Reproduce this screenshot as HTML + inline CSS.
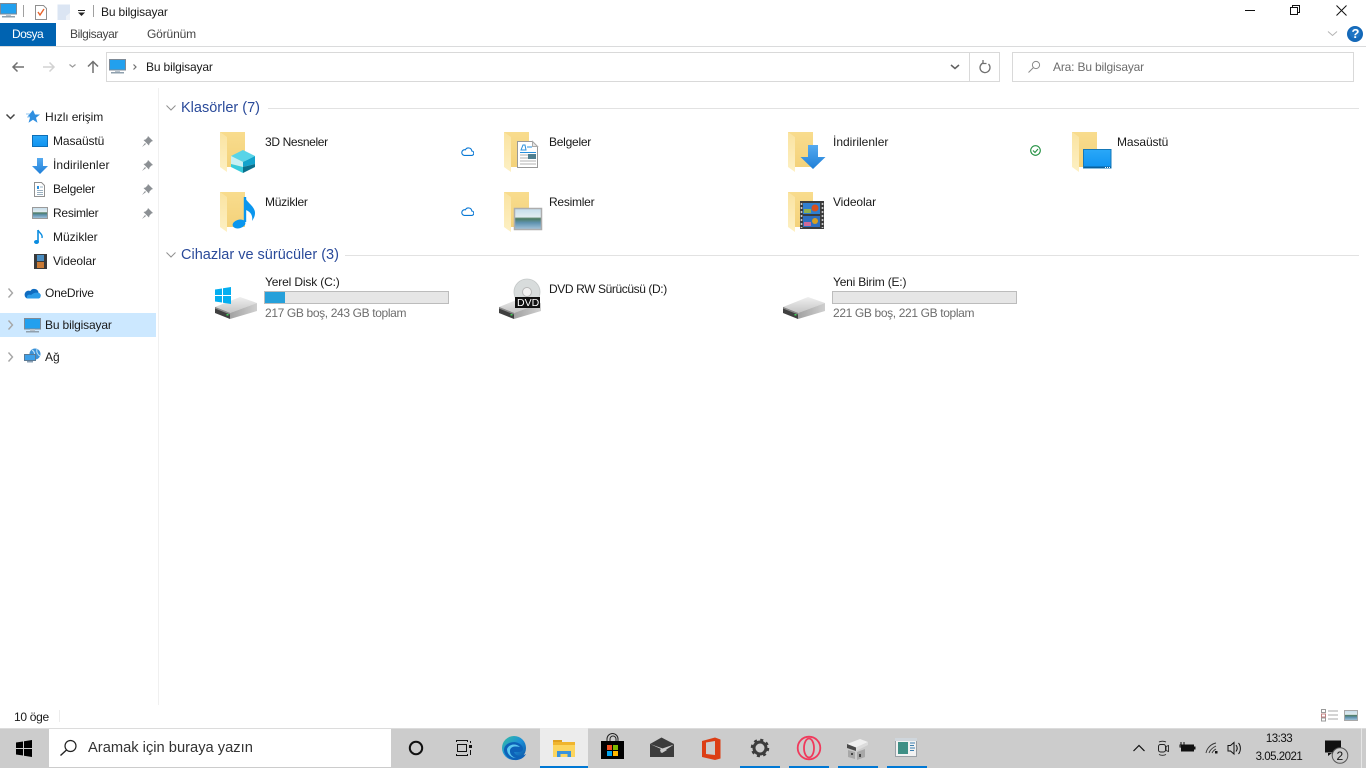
<!DOCTYPE html>
<html lang="tr"><head><meta charset="utf-8"><title>Bu bilgisayar</title>
<style>
html,body{margin:0;padding:0;width:1366px;height:768px;overflow:hidden;background:#fff;font-family:"Liberation Sans",sans-serif}
.t{position:absolute;white-space:nowrap;font-size:12px;line-height:16px;height:16px;color:#1a1a1a}
.g{color:#6d6d6d}
.r{color:#444}
.h{font-size:14.5px;line-height:20px;height:20px;color:#2a4a9a}
svg{position:absolute;left:0;top:0}
</style></head><body>
<svg width="1366" height="768" viewBox="0 0 1366 768" fill="none">
<defs>
<linearGradient id="fb" x1="0" y1="0" x2="0" y2="1"><stop offset="0" stop-color="#f8dc8e"/><stop offset="1" stop-color="#f4d27a"/></linearGradient>
<linearGradient id="fl" x1="0" y1="0" x2="0" y2="1"><stop offset="0" stop-color="#fae3a0"/><stop offset="1" stop-color="#fdf0c4"/></linearGradient>
<linearGradient id="scr" x1="0" y1="0" x2="0" y2="1"><stop offset="0" stop-color="#2aa8f8"/><stop offset="1" stop-color="#0f93f0"/></linearGradient>
<linearGradient id="arr" x1="0" y1="0" x2="0" y2="1"><stop offset="0" stop-color="#55aaf0"/><stop offset="1" stop-color="#1f7fd8"/></linearGradient>
<linearGradient id="pic" x1="0" y1="0" x2="0" y2="1"><stop offset="0" stop-color="#c4dcea"/><stop offset=".4" stop-color="#e2ecf0"/><stop offset=".48" stop-color="#4d7a60"/><stop offset=".68" stop-color="#5f93b0"/><stop offset="1" stop-color="#a8c6dc"/></linearGradient>
<linearGradient id="top" x1="0" y1="0" x2="0" y2="1"><stop offset="0" stop-color="#efefef"/><stop offset="1" stop-color="#c4c4c4"/></linearGradient>
<linearGradient id="rf" x1="0" y1="0" x2="1" y2="0"><stop offset="0" stop-color="#a2a2a2"/><stop offset="1" stop-color="#cfcfcf"/></linearGradient>
<linearGradient id="edge" x1="0" y1="0" x2="1" y2="1"><stop offset="0" stop-color="#35c1a0"/><stop offset=".5" stop-color="#1c8fd8"/><stop offset="1" stop-color="#0b4f9e"/></linearGradient>

<symbol id="folder" viewBox="0 0 40 40" width="40" height="40" overflow="visible">
<rect x="0" y="0" width="25" height="35" fill="url(#fb)"/>
<path d="M0 0l7 5v35l-7-5z" fill="url(#fl)"/>
</symbol>
<symbol id="drive" viewBox="0 0 44 24" width="44" height="24" overflow="visible">
<path d="M1 10L26 0 43 6 16 16z" fill="url(#top)"/>
<path d="M16 16L43 6v8L16 22z" fill="url(#rf)"/>
<path d="M1 10l15 6v6L1 16z" fill="#404040"/>
<path d="M1 10l15 6v1.500L1 11.500z" fill="#8a8a8a"/>
<rect x="12.500" y="17" width="2" height="1.500" fill="#3fd45a"/>
</symbol>
<symbol id="mon" viewBox="0 0 17 15" width="17" height="15">
<rect x=".5" y=".5" width="16" height="10.5" fill="#22a0ee" stroke="#7f8a96"/>
<rect x="6" y="11" width="5" height="2" fill="#b9c3cc"/>
<rect x="2" y="13" width="13" height="1.500" fill="#8fa0ae"/>
</symbol>
<symbol id="pin" viewBox="0 0 11 11" width="11" height="11">
<path d="M6 0l5 5-1.500 .5L7.500 7.500 7 9.500 1.500 4 3.500 3.500 5.500 1.500z M3 7l-3 4 4-3z" fill="#8c9094"/>
</symbol>
<symbol id="cloud" viewBox="0 0 13 9" width="13" height="9">
<path d="M3 8.400h7.400a2.200 2.200 0 0 0 .4-4.400A3.400 3.400 0 0 0 4.400 2.800 2.800 2.800 0 0 0 3 8.400z" stroke="#0a78d4" stroke-width="1.100" fill="none"/>
</symbol>
</defs>

<!-- title bar -->
<use href="#mon" x="0" y="3"/>
<rect x="23" y="5" width="1" height="12" fill="#a0a0a0"/>
<path d="M35.500 5.500h8l3 3v11h-11z" fill="#fff" stroke="#8f8f8f"/>
<path d="M38 12l2 3 4-6" stroke="#e8622a" stroke-width="1.400"/>
<path d="M57.500 4.500h12.500v15.500h-12.500z" fill="#dbe5f3"/>
<path d="M66 16l4-3v7h-4z" fill="#eef2f8"/>
<rect x="78" y="10" width="7" height="1" fill="#222"/>
<path d="M78 12.500h7l-3.500 3.500z" fill="#222"/>
<rect x="93" y="5" width="1" height="12" fill="#a0a0a0"/>
<rect x="1245" y="10" width="10" height="1" fill="#111"/>
<path d="M1290.500 7.500h7v7h-7z M1292.500 7.500v-2h7v7h-2" stroke="#111"/>
<path d="M1336.500 5.500l10 10m0-10l-10 10" stroke="#111"/>

<!-- ribbon -->
<rect x="0" y="23" width="56" height="23" fill="#0063b1"/>
<rect x="0" y="46" width="1366" height="1" fill="#dadbdc"/>
<path d="M1328 31.500l4.500 4 4.500-4" stroke="#b4b4b4"/>
<circle cx="1355" cy="34" r="8" fill="#1468b8"/>
<circle cx="1355" cy="33" r="5.500" fill="#2a82d0" opacity=".5"/>

<!-- nav -->
<path d="M13 67h11M17.500 62.500L13 67l4.500 4.500" stroke="#707070" stroke-width="1.500"/>
<path d="M43 67h11M49.500 62.500L54 67l-4.500 4.500" stroke="#d2d2d2" stroke-width="1.500"/>
<path d="M69.500 64.500l3 2.500 3-2.500" stroke="#9a9a9a" stroke-width="1.200"/>
<path d="M93 73V61.500M88 66.500l5-5 5 5" stroke="#707070" stroke-width="1.500"/>
<rect x="106.500" y="52.500" width="893" height="29" stroke="#d9d9d9"/>
<rect x="969" y="53" width="1" height="28" fill="#d9d9d9"/>
<use href="#mon" x="109" y="59"/>
<path d="M133.500 64.500l2.500 2.500-2.500 2.500" stroke="#707070" stroke-width="1.200"/>
<path d="M951 65l4 3.500 4-3.500" stroke="#606060" stroke-width="1.500"/>
<path d="M988.500 64a5 5 0 1 1-5.500-1M983 60v3.500h3.500" stroke="#707070" stroke-width="1.300"/>
<rect x="1012.500" y="52.500" width="341" height="29" stroke="#d9d9d9"/>
<circle cx="1036" cy="65" r="3.600" stroke="#8a8a8a"/>
<path d="M1033.500 67.500l-5 5" stroke="#8a8a8a"/>

<!-- sidebar -->
<rect x="158" y="88" width="1" height="617" fill="#f0f0f0"/>
<rect x="0" y="313" width="156" height="24" fill="#cce8ff"/>
<path d="M6.500 114.500l4 4 4-4" stroke="#444" stroke-width="1.500"/>
<path d="M33 110l2 4.500h5l-4 3.300 1.500 5-4.500-3-4.500 3 1.500-5-2-1.800z" fill="#2f8fe0"/>
<path d="M26 114h4M27 117h3" stroke="#8fc6f0"/>
<rect x="32.500" y="135.500" width="15" height="11" fill="url(#scr)" stroke="#0d6fb8"/>
<path d="M37 158h6v8h5l-8 8-8-8h5z" fill="url(#arr)"/>
<path d="M34.500 182.500h7l3 3v11h-10z" fill="#fff" stroke="#909090"/>
<path d="M37 186h2v3h-2z" fill="#2a90dd"/><path d="M37 190.500h6M37 192.500h6M37 194.500h6M40 187h3" stroke="#9ab0c0"/>
<rect x="32.500" y="207.500" width="15" height="11" fill="url(#pic)" stroke="#9a9a9a"/>
<path d="M38 230v12" stroke="#0a8ce0" stroke-width="1.600"/>
<path d="M38 230c1 3 5 4 4 8" stroke="#0a8ce0" stroke-width="1.400"/>
<ellipse cx="36.500" cy="242" rx="2.500" ry="2" fill="#0a8ce0"/>
<rect x="34" y="254" width="13" height="15" fill="#3a3a3a"/>
<rect x="37" y="255" width="7" height="6" fill="#4a8dc0"/><rect x="37" y="262" width="7" height="6" fill="#c97a35"/>
<use href="#pin" x="142" y="136"/><use href="#pin" x="142" y="160"/><use href="#pin" x="142" y="184"/><use href="#pin" x="142" y="208"/>
<path d="M8.500 288.500l4 4.500-4 4.500M8.500 320.500l4 4.500-4 4.500M8.500 352.500l4 4.500-4 4.500" stroke="#a6a6a6" stroke-width="1.400"/>
<path d="M27 298.500h11a2.800 2.800 0 0 0 .6-5.500A4.500 4.500 0 0 0 30.300 291 3.800 3.800 0 0 0 27 298.500z" fill="#0f6cc0"/>
<path d="M27 298.500h11a2.800 2.800 0 0 0 .6-5.500c-3-1-6 .5-7.500 2-2-1-5 0-4.100 3.500z" fill="#2a9be8"/>
<use href="#mon" x="24" y="318"/>
<circle cx="35" cy="354" r="5.500" fill="#3a92d8"/>
<path d="M32 350c2 1 4 4 1 8M37 349c-1 3 1 6 3 7" stroke="#bfe0f5"/>
<rect x="24.500" y="354.500" width="11" height="6" fill="#3ea0e8" stroke="#5a7a95"/>
<rect x="27" y="361" width="6" height="1.500" fill="#8aa0b5"/>

<!-- headers -->
<path d="M166.500 105.500l4.500 4.500 4.500-4.500M166.500 252.500l4.500 4.500 4.500-4.500" stroke="#909090"/>
<rect x="268" y="108" width="1091" height="1" fill="#e2e2e2"/>
<rect x="345" y="255" width="1014" height="1" fill="#e2e2e2"/>

<!-- folders -->
<use href="#folder" x="220" y="132"/>
<path d="M243 150l12 6-12 6-12-6z" fill="#58d4e8"/>
<path d="M231 156l12 6v5l-12-3z" fill="#c8f0f4"/>
<path d="M243 162l12-6v8l-12 3z" fill="#13a3cc"/>
<path d="M231 164l12 3v6l-12-6z" fill="#38cbdc"/>
<path d="M243 167l12-3v3l-12 6z" fill="#0a6f8c"/>

<use href="#folder" x="504" y="132"/>
<path d="M517.500 141.500h15l5 5v21h-20z" fill="#fff" stroke="#999"/>
<path d="M532.500 141.500v5h5z" stroke="#aaa" fill="#e8e8e8"/>
<path d="M521 150l2-5h2l1 5zM527 147h5M520 152.500h16" stroke="#2a90dd" stroke-width="1"/>
<path d="M520 155h8M520 158h8M520 161h16M520 164h16" stroke="#b0b0b0"/>
<rect x="528" y="154" width="8" height="5" fill="#4f7f90"/>

<use href="#folder" x="788" y="132"/>
<path d="M808 145h10v12h7.500l-12.500 12-12.500-12h7.500z" fill="url(#arr)"/>

<use href="#folder" x="1072" y="132"/>
<rect x="1083.500" y="149.500" width="27.500" height="18.500" fill="url(#scr)" stroke="#1578b8"/>
<rect x="1084" y="166.500" width="27" height="1.500" fill="#0a5f9a"/>
<path d="M1105 167.500h1M1107 167.500h1M1109 167.500h1" stroke="#fff"/>

<use href="#folder" x="220" y="192"/>
<path d="M245 197v25" stroke="#0a96ee" stroke-width="2.400"/>
<path d="M245 197c1 5 10 9 10 16 0 3-1 5-3 8 1-5-1-9-6-11z" fill="#0a96ee"/>
<ellipse cx="239" cy="224" rx="6.500" ry="4.300" fill="#0a96ee" transform="rotate(-15 239 224)"/>

<use href="#folder" x="504" y="192"/>
<rect x="514.500" y="208.500" width="27" height="21" fill="url(#pic)" stroke="#adadad" stroke-width="1.500"/>

<use href="#folder" x="788" y="192"/>
<rect x="800" y="201" width="24" height="28" fill="#3c3c3c"/>
<rect x="803" y="203" width="17" height="11" fill="#2f7fd0"/>
<rect x="803" y="216" width="17" height="11" fill="#2f6fc0"/>
<circle cx="815" cy="208" r="3.500" fill="#d8501f"/><circle cx="815" cy="221" r="3" fill="#d8a01f"/>
<rect x="804" y="209" width="7" height="4" fill="#8fb04f"/><rect x="804" y="222" width="7" height="4" fill="#d06a9a"/>
<path d="M801.500 203v25M822.500 203v25" stroke="#c8c8c8" stroke-width="1.600" stroke-dasharray="2 2"/>

<use href="#cloud" x="461" y="147"/>
<use href="#cloud" x="461" y="207"/>
<circle cx="1035.500" cy="150.500" r="4.800" stroke="#1f8f3f" stroke-width="1.100"/>
<path d="M1033 150.500l2 2 3-3.500" stroke="#1f8f3f" stroke-width="1.100"/>

<!-- drives -->
<use href="#drive" x="214" y="297"/>
<path d="M215 289.500l7-1v6.500h-7zM223 288.300l8-1.300v8h-8zM215 296h7v6.500l-7-1zM223 296h8v8l-8-1.300z" fill="#04aef0"/>
<rect x="264.500" y="291.500" width="184" height="12" fill="#e6e6e6" stroke="#bcbcbc"/>
<rect x="265" y="292" width="20" height="11" fill="#26a0da"/>

<use href="#drive" x="498" y="297"/>
<circle cx="527" cy="292" r="13" fill="#d8dcdc"/>
<circle cx="527" cy="292" r="13" fill="none" stroke="#c4c8c8" stroke-width=".8"/>
<circle cx="527" cy="292" r="4.500" fill="#f2f2f2" stroke="#b8b8b8"/>
<rect x="515" y="297" width="25" height="11" fill="#111"/>

<use href="#drive" x="782" y="297"/>
<rect x="832.500" y="291.500" width="184" height="12" fill="#e6e6e6" stroke="#bcbcbc"/>

<!-- status -->
<rect x="59" y="710" width="1" height="12" fill="#ececec"/>
<rect x="1321.500" y="709.500" width="4" height="3" stroke="#9a9a9a"/><rect x="1321.500" y="714" width="4" height="3" stroke="#c08080"/><rect x="1321.500" y="718" width="4" height="3" stroke="#9a9a9a"/>
<path d="M1328 711h10M1328 715h10M1328 719h10" stroke="#a8a8a8"/>
<rect x="1344.500" y="710.500" width="13" height="10" fill="url(#pic)" stroke="#a8a8a8"/>

<!-- taskbar -->
<rect x="0" y="728" width="1366" height="40" fill="#cccccc"/>
<rect x="0" y="728" width="1366" height="1" fill="#dcdcdc"/>
<path d="M16 742.500l7-1v6.500h-7zM24 741.300l8-1.300v8h-8zM16 749h7v6.500l-7-1zM24 749h8v8l-8-1.300z" fill="#000"/>
<rect x="49" y="729" width="342" height="38" fill="#fff"/>
<circle cx="70.500" cy="746" r="5.500" stroke="#222" stroke-width="1.200"/>
<path d="M66.500 750l-6 5.500" stroke="#222" stroke-width="1.400"/>

<circle cx="416" cy="748" r="6.200" stroke="#111" stroke-width="2"/>
<path d="M456.500 742v-1.500h11V742M456.500 754v1.500h11V754" stroke="#111"/><rect x="457.500" y="744.500" width="9" height="7" stroke="#111"/>
<rect x="469" y="745" width="3" height="3" fill="#111"/><path d="M470.500 741v2M470.500 750v5" stroke="#111"/>

<circle cx="514" cy="748" r="12" fill="url(#edge)"/>
<path d="M504 750c0-8 13-11 18-4 2 3 1 6-3 6h-5c1 4 7 5 12 2-3 6-11 8-17 4-3-2-5-5-5-8z" fill="#0d62b8"/>
<path d="M507 749c2-5 9-6 13-2-4-1-9-1-10 3-.5 4 2 7 6 8-5 0-9-4-9-9z" fill="#5cc8f0"/>
<rect x="540" y="728" width="48" height="40" fill="#ececec"/>
<rect x="540" y="766" width="48" height="2" fill="#0078d4"/>
<rect x="553" y="740" width="9" height="3" fill="#e0a020"/>
<rect x="553" y="742" width="22" height="15" fill="#fcd55f"/>
<rect x="553" y="742" width="22" height="3" fill="#f0b52e"/>
<path d="M557 757v-6h14v6h-3.500v-3h-7v3z" fill="#3a93dc"/>
<rect x="601" y="741" width="23" height="18" fill="#000"/>
<path d="M607 741v-2a5.500 5.500 0 0 1 11 0v2M610 741v-2a3 3 0 0 1 6 0v2" stroke="#222" stroke-width="1"/>
<rect x="607" y="745" width="5" height="5" fill="#f25022"/><rect x="613" y="745" width="5" height="5" fill="#7fba00"/>
<rect x="607" y="751" width="5" height="5" fill="#00a4ef"/><rect x="613" y="751" width="5" height="5" fill="#ffb900"/>
<path d="M650 744l11.500-6.500L674 744v13h-24z" fill="#3c3c3c"/>
<path d="M650 744l17 6-5 3-1-4z" fill="#cccccc"/>
<path d="M674 744.500l-13 4.500-1 1 1 3z" fill="#cccccc"/>
<path d="M702 741l13-3.500 5.500 2v19l-5.500 1.500-13-3z" fill="#dc3e15"/>
<path d="M706 742.500l9-1.500v14l-9-1z" fill="#cccccc"/>
<circle cx="760" cy="748" r="6" stroke="#3c3c3c" stroke-width="3"/>
<circle cx="760" cy="748" r="8" stroke="#3c3c3c" stroke-width="2.500" stroke-dasharray="3 3.280"/>
<rect x="740" y="766" width="40" height="2" fill="#0078d4"/>
<ellipse cx="809" cy="748" rx="11.300" ry="11.300" stroke="#f03a5c" stroke-width="1.800"/>
<ellipse cx="809" cy="748" rx="5" ry="9.500" stroke="#f03a5c" stroke-width="1.800"/>
<rect x="789" y="766" width="40" height="2" fill="#0078d4"/>
<path d="M847 744l13-5 8 3-12 5.500z" fill="#f0f0f0"/>
<path d="M847 744l9 3.500v3.500l-9-3z" fill="#4a4a4a"/><path d="M856 747.500l12-5.500v3l-12 6z" fill="#dcdcdc"/>
<path d="M848 750l7 2v7l-7-2zM857 752l8-3v8l-8 3z" fill="#a8a8a8"/><path d="M851 753h2v2h-2zM859 754h2v3h-2z" fill="#444"/>
<rect x="838" y="766" width="40" height="2" fill="#0078d4"/>
<rect x="895.500" y="738.500" width="21" height="18" fill="#f2f2f2" stroke="#9aa0a6"/>
<rect x="895" y="738" width="22" height="3" fill="#cfd6dc"/>
<rect x="898" y="742" width="10" height="12" fill="#3f8f85"/>
<path d="M910 743h5M910 745.500h4M910 748h5M910 750.500h4" stroke="#3a7fb0"/>
<rect x="887" y="766" width="40" height="2" fill="#0078d4"/>

<!-- tray -->
<path d="M1133.500 751l5.500-5.500 5.500 5.500" stroke="#111" stroke-width="1.200"/>
<rect x="1158.500" y="744.500" width="7" height="7.500" rx="2" stroke="#222"/>
<path d="M1166 746.500l2.500-1v6l-2.500-1zM1159 742c2-1 5-1 7 0M1159 754.500c2 1 5 1 7 0" stroke="#222" stroke-width=".9"/>
<rect x="1181" y="744.500" width="13" height="7" fill="#111"/><rect x="1194" y="746.500" width="1.500" height="3" fill="#111"/>
<path d="M1181 742v3M1184 742v3M1180 745h5v2h-5zM1182.500 747v3" stroke="#111"/>
<path d="M1206 753c1-5 5-9 10-10M1209 753c1-3 3-5 7-7M1212 753c.5-1 2-3 4-4" stroke="#333" stroke-width=".9"/>
<rect x="1215" y="751" width="2.500" height="2.500" fill="#111"/>
<path d="M1228 745.500h2.500l3.500-3v11.500l-3.500-3H1228z" stroke="#111"/>
<path d="M1236 745c1.500 2 1.500 4.500 0 6.500M1238.500 743c2.500 3 2.500 8 0 11" stroke="#111"/>
<rect x="1325" y="740.500" width="16" height="12" fill="#111"/>
<path d="M1328 753v3l4-3z" fill="#111"/>
<circle cx="1340" cy="755.500" r="7.800" fill="#cccccc" stroke="#555"/>
<rect x="1361" y="728" width="1" height="40" fill="#e6e6e6"/>
</svg>

<div class="t" style="left:101px;top:4px;letter-spacing:-.15px">Bu bilgisayar</div>
<div class="t" style="left:12px;top:26px;color:#fff;letter-spacing:-.6px">Dosya</div>
<div class="t r" style="left:70px;top:26px;letter-spacing:-.4px">Bilgisayar</div>
<div class="t r" style="left:147px;top:26px;letter-spacing:-.15px">Görünüm</div>
<div class="t" style="left:1351.500px;top:26px;color:#fff;font-weight:bold;font-size:13px">?</div>
<div class="t" style="left:146px;top:59px;letter-spacing:-.15px">Bu bilgisayar</div>
<div class="t g" style="left:1053px;top:59px;letter-spacing:-.17px">Ara: Bu bilgisayar</div>

<div class="t" style="left:45px;top:109px;letter-spacing:-.1px">Hızlı erişim</div>
<div class="t" style="left:53px;top:133px;letter-spacing:-.1px">Masaüstü</div>
<div class="t" style="left:53px;top:157px;letter-spacing:.1px">İndirilenler</div>
<div class="t" style="left:53px;top:181px;letter-spacing:-.25px">Belgeler</div>
<div class="t" style="left:53px;top:205px;letter-spacing:-.25px">Resimler</div>
<div class="t" style="left:53px;top:229px">Müzikler</div>
<div class="t" style="left:53px;top:253px;letter-spacing:-.1px">Videolar</div>
<div class="t" style="left:45px;top:285px;letter-spacing:-.25px">OneDrive</div>
<div class="t" style="left:45px;top:317px;letter-spacing:-.15px">Bu bilgisayar</div>
<div class="t" style="left:45px;top:349px">Ağ</div>

<div class="t h" style="left:181px;top:98px">Klasörler (7)</div>
<div class="t h" style="left:181px;top:245px">Cihazlar ve sürücüler (3)</div>

<div class="t" style="left:265px;top:134px;letter-spacing:-.36px">3D Nesneler</div>
<div class="t" style="left:549px;top:134px;letter-spacing:-.25px">Belgeler</div>
<div class="t" style="left:833px;top:134px">İndirilenler</div>
<div class="t" style="left:1117px;top:134px;letter-spacing:-.1px">Masaüstü</div>
<div class="t" style="left:265px;top:194px;letter-spacing:-.25px">Müzikler</div>
<div class="t" style="left:549px;top:194px;letter-spacing:-.25px">Resimler</div>
<div class="t" style="left:833px;top:194px;letter-spacing:-.1px">Videolar</div>

<div class="t" style="left:265px;top:274px;letter-spacing:-.15px">Yerel Disk (C:)</div>
<div class="t g" style="left:265px;top:305px;letter-spacing:-.36px">217 GB boş, 243 GB toplam</div>
<div class="t" style="left:549px;top:281px;letter-spacing:-.4px">DVD RW Sürücüsü (D:)</div>
<div class="t" style="left:517px;top:295px;color:#fff;font-size:10.500px">DVD</div>
<div class="t" style="left:833px;top:274px;letter-spacing:-.2px">Yeni Birim (E:)</div>
<div class="t g" style="left:833px;top:305px;letter-spacing:-.36px">221 GB boş, 221 GB toplam</div>

<div class="t" style="left:14px;top:709px;letter-spacing:-.3px">10 öge</div>
<div class="t" style="left:88px;top:740px;font-size:14.700px;color:#333">Aramak için buraya yazın</div>
<div class="t" style="left:1239px;width:80px;text-align:center;top:731px;color:#111;font-size:11.500px;letter-spacing:-.5px">13:33</div>
<div class="t" style="left:1239px;width:80px;text-align:center;top:749px;color:#111;font-size:11.500px;letter-spacing:-.5px">3.05.2021</div>
<div class="t" style="left:1336.500px;top:747.500px;color:#111">2</div>
</body></html>
